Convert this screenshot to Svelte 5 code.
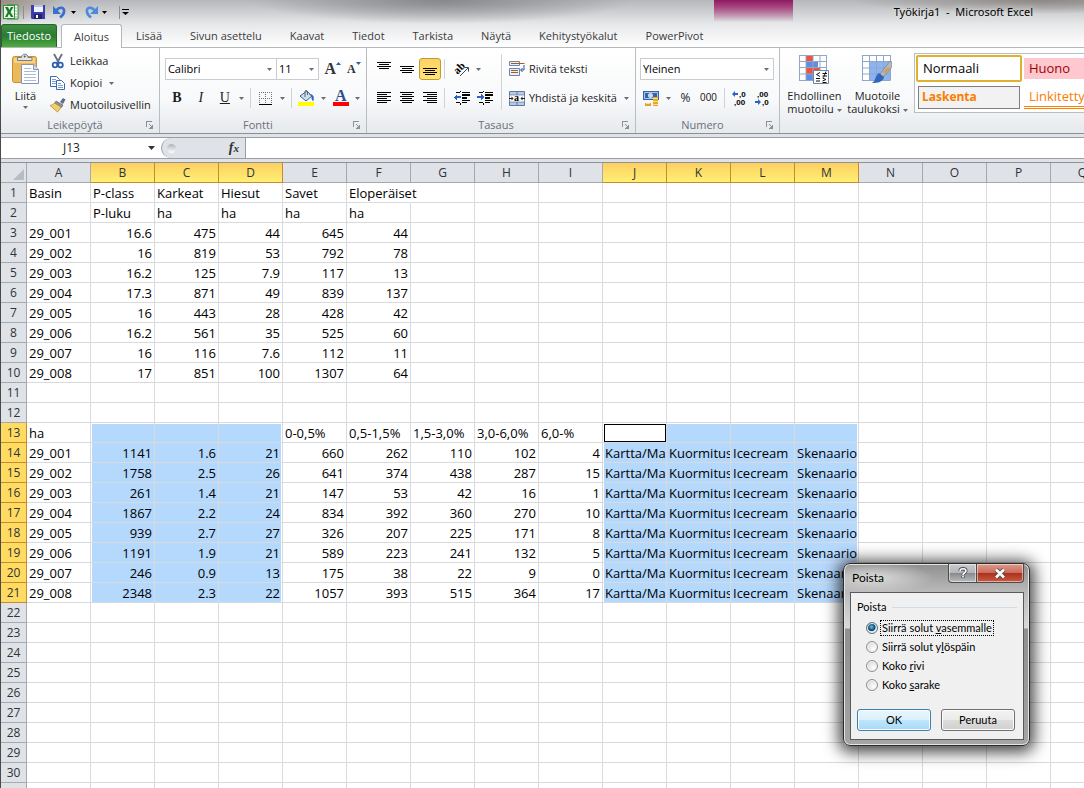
<script>
	const columns = 'ABCDEFGHIJKLMNOPQRS'.split('');
	const rowNumbers = Array.from({ length: 34 }, (_, i) => i + 1);
	const selectedColumns = 'BCDJKLM';
	const links = ['Kartta/Ma', 'Kuormitus', 'Icecream', 'Skenaario'];

	const sheet = {
		1: ['Basin', 'P-class', 'Karkeat', 'Hiesut', 'Savet', 'Eloperäiset'],
		2: ['', 'P-luku', 'ha', 'ha', 'ha', 'ha'],
		3: ['29_001', 16.6, 475, 44, 645, 44],
		4: ['29_002', 16, 819, 53, 792, 78],
		5: ['29_003', 16.2, 125, 7.9, 117, 13],
		6: ['29_004', 17.3, 871, 49, 839, 137],
		7: ['29_005', 16, 443, 28, 428, 42],
		8: ['29_006', 16.2, 561, 35, 525, 60],
		9: ['29_007', 16, 116, 7.6, 112, 11],
		10: ['29_008', 17, 851, 100, 1307, 64],
		13: ['ha', '', '', '', '0-0,5%', '0,5-1,5%', '1,5-3,0%', '3,0-6,0%', '6,0-%'],
		14: ['29_001', 1141, 1.6, 21, 660, 262, 110, 102, 4, ...links],
		15: ['29_002', 1758, 2.5, 26, 641, 374, 438, 287, 15, ...links],
		16: ['29_003', 261, 1.4, 21, 147, 53, 42, 16, 1, ...links],
		17: ['29_004', 1867, 2.2, 24, 834, 392, 360, 270, 10, ...links],
		18: ['29_005', 939, 2.7, 27, 326, 207, 225, 171, 8, ...links],
		19: ['29_006', 1191, 1.9, 21, 589, 223, 241, 132, 5, ...links],
		20: ['29_007', 246, 0.9, 13, 175, 38, 22, 9, 0, ...links],
		21: ['29_008', 2348, 2.3, 22, 1057, 393, 515, 364, 17, ...links]
	};

	const tabs = [
		'Lisää',
		'Sivun asettelu',
		'Kaavat',
		'Tiedot',
		'Tarkista',
		'Näytä',
		'Kehitystyökalut',
		'PowerPivot'
	];

	// label is split round the underlined access key
	const options = [
		{ id: 'left', before: 'Siirrä solut ', key: 'v', after: 'asemmalle' },
		{ id: 'up', before: 'Siirrä solut y', key: 'l', after: 'öspäin' },
		{ id: 'row', before: 'Koko ', key: 'r', after: 'ivi' },
		{ id: 'column', before: 'Koko ', key: 's', after: 'arake' }
	];

	let choice = $state('left');
	let open = $state(true);

	const isSelectedRow = (row) => row >= 13 && row <= 21;
	const isSelected = (row, col) => isSelectedRow(row) && selectedColumns.includes(col);
</script>

{#snippet arrow()}
	<svg class="arrow" width="5" height="3" viewBox="0 0 5 3"><path d="M0 0h5L2.5 3z" /></svg>
{/snippet}

{#snippet lines(offset, count, align)}
	<svg width="14" height="14" viewBox="0 0 14 14" shape-rendering="crispEdges">
		{#each Array(count) as _, i}
			{@const w = i % 2 ? 10 : 14}
			<rect
				x={align === 'left' ? 0 : align === 'right' ? 14 - w : (14 - w) / 2}
				y={offset + i * 2}
				width={w}
				height="1"
			/>
		{/each}
	</svg>
{/snippet}

{#snippet groupLabel(text)}
	<div class="group-label">
		<span>{text}</span>
		<button class="launcher" aria-label="{text}: asetukset">
			<svg width="8" height="8" viewBox="0 0 8 8" shape-rendering="crispEdges">
				<path d="M0 6V0h6v1H1v5zM3 3h1v1h1v1h1V4h1v4H3V7h1V6h1V5H4V4H3z" fill="#8b9097" />
			</svg>
		</button>
	</div>
{/snippet}

<div class="window">
	<header class="titlebar">
		<svg width="16" height="16" viewBox="0 0 16 16">
			<path d="M4 1h11v14H4z" fill="#fff" stroke="#2b8a35" />
			<path d="M11 4h3M11 7h3M11 10h3M11 13h3" stroke="#7dbb7f" />
			<path d="M0 1h12v14H0z" fill="#2f9438" />
			<path d="M1 2h10v12H1z" fill="#e6f4e4" />
			<path d="M2 3h3l1.300 3L8 3h2.500L7.500 8l3 5H8L6 9.800 4.500 13H2l2.700-5z" fill="#1d7a2a" />
		</svg>
		<i class="bar"></i>
		<button class="quick save" aria-label="Tallenna">
			<svg width="14" height="14" viewBox="0 0 14 14">
				<path d="M0 0h14v14H1l-1-1z" fill="#3c3cae" />
				<path d="M3 0h9v7H3z" fill="#eef2fb" />
				<path d="M3 0h9v2H3z" fill="#b9c4ee" />
				<path d="M3 9h8v5H3z" fill="#22226e" />
				<path d="M5 10h2v3H5z" fill="#fff" />
			</svg>
		</button>
		<button class="quick" aria-label="Kumoa">
			<svg width="14" height="14" viewBox="0 0 14 14">
				<path d="M3 6C6 1 12 2 11 7c-.3 2.500-2 4-4 5.500" fill="none" stroke="#3a6fce" stroke-width="2.600" />
				<path d="M0 1v8h8z" fill="#3a6fce" />
			</svg>
			{@render arrow()}
		</button>
		<button class="quick" aria-label="Tee uudelleen">
			<svg width="14" height="14" viewBox="0 0 14 14">
				<path d="M11 6C8 1 2 2 3 7c.3 2.500 2 4 4 5.500" fill="none" stroke="#4c8ada" stroke-width="2.600" />
				<path d="M14 1v8H6z" fill="#4c8ada" />
			</svg>
			{@render arrow()}
		</button>
		<i class="bar"></i>
		<button class="quick custom" aria-label="Mukauta">
			<svg width="7" height="6" viewBox="0 0 7 6"><path d="M0 0h7v1H0zM0 3h7L3.500 6z" /></svg>
		</button>
		<h1>Työkirja1 &nbsp;- &nbsp;Microsoft Excel</h1>
	</header>

	<nav class="tabs">
		<button class="file">Tiedosto</button>
		<button class="tab active">Aloitus</button>
		{#each tabs as tab}
			<button class="tab">{tab}</button>
		{/each}
	</nav>

	<div class="ribbon">
		<section class="group">
			<div class="body clipboard">
				<button class="big paste">
					<svg width="28" height="32" viewBox="0 0 28 32">
						<rect x=".5" y="3.500" width="24" height="26" rx="2" fill="#eab95c" stroke="#c98f35" />
						<path d="M2 5h21v5H2z" fill="#f5d28a" />
						<path d="M5.500 7.500v-3h4C9.500 0 16 0 16 4.500h4v3z" fill="#e3e5e8" stroke="#7b7f86" />
						<circle cx="12.700" cy="3.500" r="1" fill="#555" />
						<path d="M9.500 11.500h12l5 5v14h-17z" fill="#fff" stroke="#8295b5" />
						<path d="M21.500 11.500v5h5" fill="#d5e0f2" stroke="#8295b5" />
						<path d="M12 15.500h7M12 18.500h12M12 21.500h12M12 24.500h12M12 27.500h12" stroke="#a9bbd9" />
					</svg>
					<span>Liitä</span>
					{@render arrow()}
				</button>
				<div class="stack">
					<button class="text">
						<svg width="16" height="16" viewBox="0 0 16 16">
							<path d="M4 1l5 9M12 1L7 10" stroke="#65717f" stroke-width="1.800" />
							<circle cx="5" cy="12" r="2.300" fill="none" stroke="#2f5fb3" stroke-width="1.800" />
							<circle cx="10.500" cy="12" r="2.300" fill="none" stroke="#2f5fb3" stroke-width="1.800" />
						</svg>
						Leikkaa
					</button>
					<button class="text">
						<svg width="16" height="16" viewBox="0 0 16 16">
							<path d="M.5 1.500h6l3 3v7h-9z" fill="#fff" stroke="#3e68ab" />
							<path d="M2 4.500h4M2 6.500h5M2 8.500h4" stroke="#7c9fd6" />
							<path d="M6.500 5.500h5l3 3v6h-8z" fill="#fff" stroke="#3e68ab" />
							<path d="M8 8.500h3M8 10.500h5M8 12.500h5" stroke="#7c9fd6" />
						</svg>
						Kopioi
						{@render arrow()}
					</button>
					<button class="text">
						<svg width="16" height="16" viewBox="0 0 16 16">
							<path d="M10 5l3-4 2.500 1.500L13 7z" fill="#5d6a90" />
							<path d="M6 4l7 4-1.500 2.500-7-4z" fill="#8c8f98" stroke="#5b5e66" stroke-width=".6" />
							<path d="M4.500 6L11 10c-1 2-2 3.500-3.500 5L0 8.500c2-.5 3.500-1 4.500-2.500z" fill="#f3cf6c" stroke="#a98130" stroke-width=".7" />
						</svg>
						Muotoilusivellin
					</button>
				</div>
			</div>
			{@render groupLabel('Leikepöytä')}
		</section>

		<section class="group">
			<div class="body rows font">
				<div class="row">
					<label class="combo font-name">
						<select aria-label="Fontti"><option>Calibri</option></select>
						{@render arrow()}
					</label>
					<label class="combo font-size">
						<select aria-label="Fonttikoko"><option>11</option></select>
						{@render arrow()}
					</label>
					<button class="tool grow" aria-label="Suurenna fonttia">
						<b>A</b><svg width="5" height="3" viewBox="0 0 5 3"><path d="M0 3h5L2.500 0z" fill="#2f5d9f" /></svg>
					</button>
					<button class="tool grow small" aria-label="Pienennä fonttia">
						<b>A</b><svg width="5" height="3" viewBox="0 0 5 3"><path d="M0 0h5L2.500 3z" fill="#2f5d9f" /></svg>
					</button>
				</div>
				<div class="row serif">
					<button class="tool"><b>B</b></button>
					<button class="tool"><em>I</em></button>
					<button class="tool"><u>U</u></button>
					<button class="drop" aria-label="Alleviivaus">{@render arrow()}</button>
					<i class="bar"></i>
					<button class="tool" aria-label="Reunat">
						<svg width="13" height="13" viewBox="0 0 13 13" shape-rendering="crispEdges">
							<path d="M0 .5h13M0 6.500h13M.5 0v12M6.500 0v12M12.500 0v12" stroke="#777" stroke-dasharray="1 1" />
							<path d="M0 12h13v1H0z" />
						</svg>
					</button>
					<button class="drop" aria-label="Reunavaihtoehdot">{@render arrow()}</button>
					<i class="bar"></i>
					<button class="tool" aria-label="Täyttöväri">
						<svg width="17" height="16" viewBox="0 0 17 16">
							<path d="M2 6l7-5 5 5-6 5z" fill="#cfdff5" stroke="#49618c" />
							<path d="M7 7V1.500C7 0 9.500 0 9.500 2v3" fill="none" stroke="#566" />
							<path d="M11 4c4 0 5.500 2 4.500 7-2-.5-2-2-2-4.500z" fill="#2f62c0" />
							<path d="M0 12h16v4H0z" fill="#ff0" />
						</svg>
					</button>
					<button class="drop" aria-label="Täyttövärit">{@render arrow()}</button>
					<button class="tool" aria-label="Fontin väri">
						<span class="font-color">A</span>
					</button>
					<button class="drop" aria-label="Fonttivärit">{@render arrow()}</button>
				</div>
			</div>
			{@render groupLabel('Fontti')}
		</section>

		<section class="group">
			<div class="body split">
				<div class="rows align">
					<div class="row">
						<button class="tool" aria-label="Tasaa ylös">{@render lines(0, 4, 'center')}</button>
						<button class="tool" aria-label="Tasaa keskelle">{@render lines(4, 4, 'center')}</button>
						<button class="tool pressed" aria-label="Tasaa alas">{@render lines(6, 4, 'center')}</button>
						<i class="bar"></i>
						<button class="tool orientation" aria-label="Suunta">
							<svg width="16" height="14" viewBox="0 0 16 14">
								<text x="0" y="10" transform="rotate(-45 5 7)">ab</text>
								<path d="M6 14l8-8M10.500 5.500H14.500v4" fill="none" stroke="#444" />
							</svg>
						</button>
						<button class="drop" aria-label="Suuntavaihtoehdot">{@render arrow()}</button>
					</div>
					<div class="row">
						<button class="tool" aria-label="Tasaa vasemmalle">{@render lines(1, 6, 'left')}</button>
						<button class="tool" aria-label="Keskitä">{@render lines(1, 6, 'center')}</button>
						<button class="tool" aria-label="Tasaa oikealle">{@render lines(1, 6, 'right')}</button>
						<i class="bar"></i>
						<button class="tool" aria-label="Pienennä sisennystä">
							<svg width="16" height="14" viewBox="0 0 16 14" shape-rendering="crispEdges">
								<path d="M2 1h4v1H2zM8 1h8v1H8zM8 3h8v2H8zM8 6h5v2H8zM8 9h8v1H8zM2 11h4v1H2zM8 11h5v1H8zM6 0h1v1H6zM6 12h1v2H6z" />
								<path d="M0 6l3-3v2h4v2H3v3z" fill="#2b62c4" />
							</svg>
						</button>
						<button class="tool" aria-label="Suurenna sisennystä">
							<svg width="16" height="14" viewBox="0 0 16 14" shape-rendering="crispEdges">
								<path d="M2 1h4v1H2zM8 1h8v1H8zM8 3h8v2H8zM8 6h5v2H8zM8 9h8v1H8zM2 11h4v1H2zM8 11h5v1H8zM6 0h1v1H6zM6 12h1v2H6z" />
								<path d="M7 6L4 3v2H0v2h4v3z" fill="#2b62c4" />
							</svg>
						</button>
					</div>
				</div>
				<i class="bar tall"></i>
				<div class="rows wrap">
					<button class="text">
						<svg width="16" height="16" viewBox="0 0 16 16">
							<path d="M.5.5h10v4H.5zM.5 7.500h10v7H.5z" fill="#e8eef8" stroke="#6c84ab" />
							<path d="M2 2.500h13.500M2 9.500h7M2 11.500h7" stroke="#a55b1c" />
							<path d="M15 4v5h-3M13.500 7L11.500 9l2 2" fill="none" stroke="#2b56a0" />
						</svg>
						Rivitä teksti
					</button>
					<button class="text">
						<svg width="16" height="15" viewBox="0 0 16 15">
							<path d="M.5.5h15v14H.5z" fill="#b7c9e4" stroke="#5f79a4" />
							<path d="M8 0v4M8 11v4" stroke="#5f79a4" />
							<path d="M.5 4h15v7H.5z" fill="#fff" stroke="#5f79a4" stroke-width=".7" />
							<path d="M0 7.500h3M13 7.500h3" stroke="#222" />
							<path d="M4.500 7.500L2.500 5.500v4zM11.500 7.500l2-2v4z" fill="#222" />
							<text x="5" y="10" font-size="10" font-weight="bold" font-family="Liberation Serif, serif">a</text>
						</svg>
						Yhdistä ja keskitä
						{@render arrow()}
					</button>
				</div>
			</div>
			{@render groupLabel('Tasaus')}
		</section>

		<section class="group">
			<div class="body rows format">
				<label class="combo">
					<select aria-label="Lukumuoto"><option>Yleinen</option></select>
					{@render arrow()}
				</label>
				<div class="row">
					<button class="tool" aria-label="Valuutta">
						<svg width="17" height="17" viewBox="0 0 17 17">
							<path d="M0 1h16v9H0z" fill="#3963a8" />
							<path d="M1.500 2.500h13v6h-13z" fill="none" stroke="#a9c4ee" />
							<circle cx="7.500" cy="5.500" r="2.500" fill="#c7daf6" />
							<path d="M10 7h5v9h-5z" fill="#e6a927" />
							<path d="M10 8.500h5M10 11.500h5M10 14.500h5M2 14.500h6" stroke="#fbe28a" />
							<path d="M2 13h6v3H2z" fill="#e0a02a" />
							<path d="M3 13.500h4" stroke="#fbe28a" />
						</svg>
					</button>
					<button class="drop" aria-label="Valuutat">{@render arrow()}</button>
					<button class="tool">%</button>
					<button class="tool thousands">000</button>
					<i class="bar"></i>
					<button class="tool decimals" aria-label="Lisää desimaaleja">
						<svg width="16" height="16" viewBox="0 0 16 16">
							<path d="M0 4l3-3v2h3v2H3v2z" fill="#2b62c4" />
							<text x="7" y="7">,0</text><text x="2" y="15">,00</text>
						</svg>
					</button>
					<button class="tool decimals" aria-label="Vähennä desimaaleja">
						<svg width="16" height="16" viewBox="0 0 16 16">
							<path d="M6 12L3 9v2H0v2h3v2z" fill="#2b62c4" />
							<text x="2" y="7">,00</text><text x="7" y="15">,0</text>
						</svg>
					</button>
				</div>
			</div>
			{@render groupLabel('Numero')}
		</section>

		<section class="group styles">
			<div class="body split">
				<button class="big">
					<svg width="30" height="30" viewBox="0 0 30 30">
						<path d="M.5.500h27v25H.5z" fill="#fff" />
						<path d="M7 0h7v7H7zM7 13h7v6H7zM14 13h7v6h-7z" fill="#f25238" />
						<path d="M7 7h12v6H7zM7 19h7v6H7z" fill="#5d8ee6" />
						<path d="M.5 0v25.500M7 0v25.500M14 0v25.500M21 0v25.500M27.500 0v25.500M0 .5h28M0 6.500h28M0 12.500h28M0 19h28M0 25.500h28" stroke="#93a6c6" fill="none" />
						<path d="M14.500 15.500h15v13h-15z" fill="#fff" stroke="#7183a2" />
						<path d="M21 17.500l-3.500 2 3.500 2M17 23.500h4M17 26h4M23.500 18.500h4.500M23.500 21h4.500M27 16.500l-2.500 6M23.500 23l3.500 1.500-3.500 1.500M23.500 27.500h4" stroke="#111" fill="none" />
					</svg>
					<span>Ehdollinen<br />muotoilu {@render arrow()}</span>
				</button>
				<button class="big">
					<svg width="30" height="30" viewBox="0 0 30 30">
						<path d="M.5.500h28v25H.5z" fill="#fff" />
						<path d="M7.500 6.500h21v19h-21z" fill="#8db4ef" />
						<path d="M.5 0v25.500M7.500 0v25.500M14.500 0v25.500M21.500 0v25.500M28.500 0v25.500M0 .5h28M0 6.500h28M0 13h28M0 19h28M0 25.500h28" stroke="#8fa6cc" fill="none" />
						<path d="M28 6l2 1v5L21 22l-3-3z" fill="#b4b8bd" stroke="#70757c" stroke-width=".6" />
						<path d="M26 12l2 2-4 5-3-2z" fill="#c9a06a" />
						<path d="M17 18l5 4c-1 5-6 6-12 6 4-2 3-8 7-10z" fill="#3168bd" />
					</svg>
					<span>Muotoile<br />taulukoksi {@render arrow()}</span>
				</button>
				<div class="gallery">
					<button class="style normal">Normaali</button>
					<button class="style bad">Huono</button>
					<button class="style calc">Laskenta</button>
					<button class="style linked">Linkitetty</button>
				</div>
			</div>
		</section>
	</div>

	<div class="formula-bar">
		<label class="name-box">
			<input value="J13" aria-label="Nimiruutu" />
			<svg width="7" height="4" viewBox="0 0 7 4"><path d="M0 0h7L3.500 4z" fill="#333" /></svg>
		</label>
		<div class="fx">
			<i class="knob"></i>
			<button aria-label="Lisää funktio"><em>f<small>x</small></em></button>
		</div>
		<input class="formula" aria-label="Kaavarivi" />
	</div>

	<main class="sheet">
		<table>
			<thead>
				<tr>
					<th class="corner" aria-label="Valitse kaikki">
						<svg width="11" height="11" viewBox="0 0 11 11"><path d="M11 0v11H0z" fill="#b9bdc3" /></svg>
					</th>
					{#each columns as col}
						<th class:lit={selectedColumns.includes(col)}>{col}</th>
					{/each}
				</tr>
			</thead>
			<tbody>
				{#each rowNumbers as row}
					<tr class:first={row === 13}>
						<th class:lit={isSelectedRow(row)}>{row}</th>
						{#each columns as col, i}
							{@const value = sheet[row]?.[i] ?? ''}
							<td
								class:number={typeof value === 'number'}
								class:selected={isSelected(row, col)}
								class:start={col === 'B' || col === 'J'}
								class:end={col === 'D' || col === 'M'}
								class:cursor={row === 13 && col === 'J'}
								class:spill={value === 'Eloperäiset'}>{value}</td
							>
						{/each}
					</tr>
				{/each}
			</tbody>
		</table>
	</main>

	{#if open}
		<form class="dialog" onsubmit={(e) => e.preventDefault()}>
			<div class="dialog-title">
				<h2>Poista</h2>
				<button type="button" class="help" aria-label="Ohje">
					<svg width="10" height="12" viewBox="0 0 12 14">
						<path d="M2.500 4.500C2.500 1 9.500 1 9.500 4.500 9.500 7 6 6.500 6 9.500M6 10.500v2.500" fill="none" stroke="#4b4f55" stroke-width="4" />
						<path d="M2.500 4.500C2.500 1 9.500 1 9.500 4.500 9.500 7 6 6.500 6 9.500M6 10.500v2" fill="none" stroke="#fff" stroke-width="2" />
					</svg>
				</button>
				<button type="button" class="close" aria-label="Sulje" onclick={() => (open = false)}>
					<svg width="12" height="11" viewBox="0 0 12 11">
						<path d="M2 1.500l8 8M10 1.500l-8 8" stroke="#5b4a4a" stroke-width="4.500" />
						<path d="M2 1.500l8 8M10 1.500l-8 8" stroke="#fff" stroke-width="2.600" />
					</svg>
				</button>
			</div>
			<div class="dialog-body">
				<fieldset>
					<legend>Poista</legend>
					{#each options as option}
						<label>
							<input type="radio" name="delete" value={option.id} bind:group={choice} />
							<span class:focused={choice === option.id}
								>{option.before}<u>{option.key}</u>{option.after}</span
							>
						</label>
					{/each}
				</fieldset>
				<div class="buttons">
					<button class="default" onclick={() => (open = false)}>OK</button>
					<button type="button" onclick={() => (open = false)}>Peruuta</button>
				</div>
			</div>
		</form>
	{/if}
</div>

<style>
	:global(body) {
		margin: 0;
	}

	.window {
		position: relative;
		display: flex;
		flex-direction: column;
		box-sizing: border-box;
		height: 100vh;
		overflow: hidden;
		border-left: 1px solid #4a4a4a;
		background: #dfe2e7;
		color: #1e1e1e;
		font-family: 'Open Sans', 'Noto Sans', sans-serif;
		font-size: 11px;
		line-height: 14px;
	}

	button,
	input,
	select {
		margin: 0;
		padding: 0;
		border: 0;
		background: none;
		color: inherit;
		font: inherit;
		outline: none;
	}

	svg {
		flex: none;
	}

	.arrow {
		fill: #6a6e74;
	}

	.bar {
		flex: none;
		width: 1px;
		height: 20px;
		background: #cfd2d6;
	}

	/* title bar and tabs */

	.titlebar {
		display: flex;
		align-items: center;
		height: 24px;
		padding: 0 51px 0 2px;
		background:
			linear-gradient(#8e1a62, #a8457f 7px, transparent 22px) 713px 0 / 79px 22px no-repeat,
			radial-gradient(ellipse 60px 26px at 0 0, #9b8d82, transparent),
			radial-gradient(ellipse 190px 24px at 440px 0, #86888b, transparent),
			radial-gradient(ellipse 190px 14px at 1040px 0, #8d8784, transparent),
			linear-gradient(#b5b7ba, #e6e7e9);
	}

	.titlebar .bar {
		height: 13px;
		margin: 0 7px 0 4px;
		background: #8b8e93;
	}

	.titlebar .arrow,
	.custom svg {
		fill: #000;
	}

	.quick {
		display: flex;
		align-items: center;
		gap: 4px;
		margin-right: 8px;
	}

	.custom {
		margin-left: -5px;
	}

	h1 {
		margin: 0 0 0 auto;
		color: #000;
		font-family: 'Noto Sans', 'Open Sans', sans-serif;
		font-size: 11px;
		font-weight: 400;
		text-shadow: 0 0 8px #fff;
	}

	.tabs {
		display: flex;
		height: 23px;
		border-bottom: 1px solid #b4b8bd;
		background: linear-gradient(#e6e7e9, #fff);
	}

	.tab {
		padding: 0 14px;
		color: #3b3b3b;
	}

	.file {
		width: 56px;
		margin: 0 4px 0 0;
		border: 1px solid #23682a;
		border-bottom: 0;
		border-radius: 3px 3px 0 0;
		background: linear-gradient(#3f8f42, #2a7a33 50%, #4fae3e);
		color: #fff;
	}

	.active {
		margin-bottom: -1px;
		padding: 0 12px;
		border: 1px solid #b4b8bd;
		border-bottom: 0;
		border-radius: 3px 3px 0 0;
		background: #fff;
	}

	/* ribbon */

	.ribbon {
		display: flex;
		height: 85px;
		border-bottom: 1px solid #8b9097;
		background: linear-gradient(#fff, #f8f9fa 60%, #e6e9ed);
	}

	.group {
		display: flex;
		flex: none;
		flex-direction: column;
		border-right: 1px solid #b9bdc4;
	}

	.styles {
		flex: 1 1 0;
		min-width: 0;
		overflow: hidden;
		border: 0;
	}

	.body {
		flex: 1;
	}

	.rows {
		display: flex;
		flex-direction: column;
		gap: 7px;
		padding: 10px 4px 0;
	}

	.row {
		display: flex;
		align-items: center;
		height: 22px;
	}

	.row .bar {
		margin: 0 4px;
	}

	.split {
		display: flex;
	}

	.group-label {
		display: flex;
		align-items: center;
		height: 17px;
		padding: 0 5px 0 3px;
		color: #6b7078;
	}

	.group-label span {
		flex: 1;
		text-align: center;
	}

	.launcher {
		display: flex;
	}

	.clipboard {
		display: flex;
		padding: 2px 8px 0;
	}

	.stack {
		display: flex;
		flex-direction: column;
	}

	.text {
		display: flex;
		align-items: center;
		gap: 4px;
		height: 22px;
		white-space: nowrap;
	}

	.text .arrow {
		margin-left: 3px;
	}

	.big {
		display: flex;
		flex: none;
		flex-direction: column;
		align-items: center;
		line-height: 13px;
	}

	.big .arrow {
		vertical-align: middle;
	}

	.paste {
		gap: 4px;
		width: 33px;
		margin-right: 8px;
		padding-top: 3px;
	}

	.tool {
		display: flex;
		align-items: center;
		justify-content: center;
		width: 24px;
		height: 22px;
	}

	.drop {
		display: flex;
		align-items: center;
		justify-content: center;
		width: 10px;
		height: 22px;
	}

	.combo {
		display: flex;
		align-items: center;
		box-sizing: border-box;
		height: 22px;
		padding: 0 4px 0 2px;
		border: 1px solid #c9cdd2;
		background: #fff;
		color: #000;
	}

	.combo select {
		flex: 1;
		min-width: 0;
		appearance: none;
	}

	.font {
		padding: 10px 3px 0 5px;
	}

	.font .row .bar {
		margin: 0 3px;
	}

	.font-name {
		width: 112px;
	}

	.font-size {
		width: 43px;
		margin: 0 2px 0 -1px;
	}

	.serif,
	.grow {
		font-family: 'Liberation Serif', serif;
		font-size: 14px;
	}

	.grow {
		align-items: flex-start;
	}

	.grow b {
		color: #333;
		font-size: 16px;
		line-height: 22px;
	}

	.grow svg {
		margin-top: 4px;
	}

	.grow.small {
		width: 18px;
	}

	.small b {
		font-size: 12px;
	}

	.font-color {
		width: 16px;
		border-bottom: 4px solid #f00;
		color: #2c4f8f;
		font-size: 16px;
		font-weight: 700;
		line-height: 12px;
	}

	.align {
		padding: 10px 5px 0 6px;
	}

	.align .row {
		gap: 1px;
	}

	.align .tool {
		width: 22px;
	}

	.align .row .bar {
		margin: 0 5px 0 2px;
	}

	.orientation svg {
		overflow: visible;
		font-family: 'Liberation Serif', serif;
		font-size: 11px;
		font-weight: 700;
	}

	.pressed {
		box-sizing: border-box;
		border: 1px solid #c29b2f;
		border-radius: 3px;
		background: linear-gradient(#fcd267, #ffe476);
	}

	.tall {
		height: 56px;
		margin-top: 6px;
	}

	.wrap {
		padding: 10px 6px 0 7px;
	}

	.format .combo {
		width: 134px;
	}

	.format .tool {
		width: 23px;
		font-size: 12px;
	}

	.format .drop {
		width: 11px;
	}

	.format .thousands {
		font-family: 'Liberation Sans', sans-serif;
		font-size: 10px;
	}

	.decimals svg {
		overflow: visible;
		font-family: 'Liberation Sans', sans-serif;
		font-size: 8px;
		font-weight: 700;
	}

	.styles .big {
		gap: 4px;
		width: 63px;
		padding-top: 7px;
		text-align: center;
	}

	.styles .split {
		padding-left: 3px;
	}

	.gallery {
		display: grid;
		flex: none;
		grid-template-columns: 106px 106px;
		gap: 2px;
		box-sizing: border-box;
		height: 60px;
		margin: 5px 0 0 5px;
		padding: 1px;
		border: 1px solid #b9bdc4;
		background: #fff;
		font-size: 13px;
	}

	.style {
		padding: 0 5px;
		text-align: left;
	}

	.normal {
		border: 2px solid #e0b02f;
		border-radius: 2px;
		color: #000;
	}

	.bad {
		margin: 3px 0;
		background: #ffc7ce;
		color: #9c0006;
	}

	.calc {
		margin: 2px;
		padding: 0 3px;
		border: 1px solid #7f7f7f;
		background: #f2f2f2;
		color: #fa7d00;
		font-size: 12px;
		font-weight: 700;
	}

	.linked {
		margin: 2px 0;
		border-bottom: 3px double #ff8001;
		color: #fa7d00;
	}

	/* formula bar */

	.formula-bar {
		display: flex;
		height: 20px;
		margin-top: 3px;
		border: 1px solid #9a9fa6;
		border-width: 1px 0;
		background: #fff;
	}

	.name-box {
		display: flex;
		align-items: center;
		width: 154px;
		font-size: 12px;
	}

	.name-box input {
		flex: 1;
		min-width: 0;
		padding-right: 6px;
		text-align: center;
	}

	.fx {
		display: flex;
		align-items: center;
		justify-content: space-between;
		box-sizing: border-box;
		width: 85px;
		margin-left: 6px;
		padding: 0 6px 0 5px;
		border: 1px solid #9a9fa6;
		border-width: 0 1px;
		border-radius: 10px 0 0 10px;
		background: #dfe2e6;
		color: #333;
		font-family: 'Liberation Serif', serif;
		font-size: 14px;
		font-weight: 700;
	}

	.fx small {
		font-size: 11px;
	}

	.knob {
		width: 9px;
		height: 9px;
		border-radius: 50%;
		background: linear-gradient(#b0b4b9, #fff);
	}

	.formula {
		flex: 1;
	}

	/* sheet */

	.sheet {
		flex: 1;
		min-height: 0;
		margin-top: 3px;
		overflow: hidden;
		border-top: 1px solid #8e9298;
		background: #fff;
	}

	table {
		width: 0;
		table-layout: fixed;
		border-spacing: 0;
		font-size: 13px;
		line-height: 18px;
	}

	th,
	td {
		box-sizing: border-box;
		width: 64px;
		height: 20px;
		padding: 1px 2px 0;
		border: 1px solid #d8dadd;
		border-width: 0 1px 1px 0;
		color: #000;
		white-space: nowrap;
	}

	td {
		overflow: hidden;
	}

	th {
		border-color: #a4a9b1;
		background: #dfe2e7;
		color: #2f3338;
		font-size: 12px;
		font-weight: 400;
	}

	th:first-child {
		width: 26px;
		padding: 1px 0 0;
	}

	.corner svg {
		display: block;
		margin: 3px 2px 0 auto;
	}

	.lit {
		border-color: #c68a2f;
		background: #ffdb61;
	}

	thead .lit {
		background: linear-gradient(#fdcf60, #fff075);
	}

	.number {
		text-align: right;
	}

	.spill {
		overflow: visible;
		border-right-color: transparent;
	}

	.selected {
		background: #b5d8fd;
	}

	.selected.start {
		box-shadow: inset 1px 0 #fff;
	}

	.selected.end {
		box-shadow: inset -1px 0 #fff;
	}

	.first .selected {
		box-shadow: inset 0 1px #fff;
	}

	.first .selected.start {
		box-shadow: inset 1px 1px #fff;
	}

	.first .selected.end {
		box-shadow: inset -1px 1px #fff;
	}

	.first .selected.cursor {
		background: #fff;
		box-shadow:
			inset 1px 1px #fff,
			inset 2px 2px #000,
			inset -1px -1px #000;
	}

	/* dialog */

	.dialog {
		position: absolute;
		top: 563px;
		left: 842px;
		box-sizing: border-box;
		width: 187px;
		padding: 0 5px 5px 6px;
		border: 1px solid #2b2b2b;
		border-radius: 7px;
		background:
			radial-gradient(ellipse 60px 16px at 30px 14px, #dcdcdc, transparent),
			linear-gradient(#8f8f8f, #bdbdbd 30px, #d8d8d8 64px, #909090 65px, #a5a5a5);
		box-shadow:
			inset 0 0 0 1px #e4e4e4,
			0 2px 16px 4px rgba(0, 0, 0, 0.75);
		font-family: Lato, 'Open Sans', sans-serif;
		font-size: 11px;
	}

	.dialog-title {
		display: flex;
		height: 28px;
	}

	h2 {
		flex: 1;
		margin: 0;
		padding: 7px 0 0 2px;
		color: #000;
		font-size: 12px;
		font-weight: 400;
	}

	.help,
	.close {
		display: flex;
		align-items: center;
		justify-content: center;
		box-sizing: border-box;
		width: 29px;
		height: 19px;
		border: 1px solid #4b4b4b;
		border-top: 0;
		border-radius: 0 0 0 4px;
		background: linear-gradient(#c9cbcd, #b3b5b8 50%, #85888c 50%, #b9bbbe);
		box-shadow: inset 0 0 0 1px rgba(255, 255, 255, 0.5);
	}

	.close {
		width: 48px;
		margin-left: -1px;
		border-radius: 0 0 4px;
		background: linear-gradient(#dd9a8c, #cc6b58 50%, #a92f1c 50%, #cc5b42);
	}

	.dialog-body {
		padding: 7px 6px 8px;
		border: 1px solid #5a5a5a;
		background: #f0f0f0;
		color: #000;
	}

	fieldset {
		display: flex;
		flex-direction: column;
		min-width: 0;
		margin: 0;
		padding: 0;
		border: 0;
	}

	legend {
		display: flex;
		align-items: center;
		gap: 6px;
		width: 100%;
		height: 14px;
		margin-bottom: 4px;
		padding: 0;
	}

	legend::after {
		flex: 1;
		height: 1px;
		background: #d0dce8;
		content: '';
	}

	fieldset label {
		display: flex;
		align-items: center;
		gap: 2px;
		height: 19px;
		margin-left: 9px;
	}

	fieldset span {
		padding: 0 1px;
		border: 1px solid transparent;
		line-height: 14px;
		white-space: nowrap;
	}

	.focused {
		border: 1px dotted #000;
	}

	input[type='radio'] {
		box-sizing: border-box;
		width: 12px;
		height: 12px;
		border: 1px solid #8e8f8f;
		border-radius: 50%;
		appearance: none;
		background: radial-gradient(circle at 65% 65%, #fff, #c9ccd0);
		box-shadow: inset 0 0 0 1px #f4f4f4;
	}

	input[type='radio']:checked {
		border-color: #5b7183;
		background: radial-gradient(circle at 45% 40%, #5fc4ee, #0d3d5e 45%, #d5e2ea 55%);
	}

	.buttons {
		display: flex;
		gap: 10px;
		margin-top: 15px;
	}

	.buttons button {
		box-sizing: border-box;
		width: 74px;
		height: 22px;
		border: 1px solid #707070;
		border-radius: 3px;
		background: linear-gradient(#f2f2f2, #ebebeb 50%, #ddd 50%, #cfcfcf);
		box-shadow: inset 0 0 0 1px #fcfcfc;
	}

	.buttons .default {
		border-color: #3c7fb1;
		background: linear-gradient(#eaf6fd, #d9f0fc 50%, #bee6fd 50%, #a7d9f5);
	}
</style>
